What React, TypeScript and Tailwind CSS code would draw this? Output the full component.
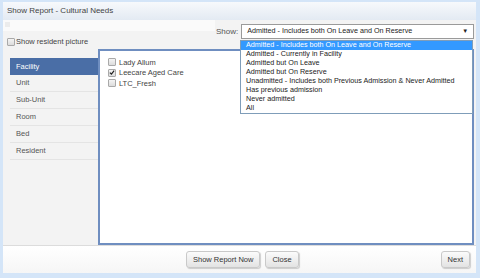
import React from "react";

const font = { fontFamily: '"Liberation Sans", Arial, sans-serif' };

const navItems = ["Facility", "Unit", "Sub-Unit", "Room", "Bed", "Resident"];

const facilities = [
  { name: "Lady Allum", checked: false },
  { name: "Leecare Aged Care", checked: true },
  { name: "LTC_Fresh", checked: false },
];

const showOptions = [
  "Admitted - Includes both On Leave and On Reserve",
  "Admitted - Currently in Facility",
  "Admitted but On Leave",
  "Admitted but On Reserve",
  "Unadmitted - Includes both Previous Admission & Never Admitted",
  "Has previous admission",
  "Never admitted",
  "All",
];

function Box({ checked }: { checked?: boolean }) {
  return (
    <span className="flex h-[8px] w-[8px] shrink-0 items-center justify-center rounded-[1px] border border-[#a9a9a9] bg-gradient-to-b from-[#f4f4f4] to-[#dcdcdc]">
      {checked && (
        <svg width="7" height="7" viewBox="0 0 7 7">
          <path d="M1 3.6 L2.8 5.4 L6 1.2" fill="none" stroke="#222" strokeWidth="1.4" />
        </svg>
      )}
    </span>
  );
}

function Button({ children }: { children: React.ReactNode }) {
  return (
    <button
      type="button"
      className="h-[17px] rounded-[3px] border border-[#c9c9c9] bg-gradient-to-b from-[#fbfbfb] to-[#e3e3e3] px-[6px] text-[7.5px] leading-none text-[#333] shadow-[1px_1px_1px_rgba(0,0,0,0.18)]"
    >
      {children}
    </button>
  );
}

export default function App() {
  return (
    <div
      style={font}
      className="relative flex h-[278px] w-[480px] flex-col bg-[#d4e5f8] pb-[5px] pl-[3px] pr-[4px] pt-[2px]"
    >
      <div className="flex flex-1 flex-col bg-[#f3f3f3]">
        {/* title */}
        <div className="flex h-[18px] items-center bg-gradient-to-b from-[#f7f9fc] to-[#e3eaf3] pl-[4px] text-[8px] text-[#444]">
          Show Report - Cultural Needs
        </div>

        {/* options row */}
        <div className="relative h-[29px]">
          <div className="flex h-[11px]">
            <div className="w-[212px] bg-[#fafafa] pl-[2px] pt-[2px]">
              <span className="block h-[5px] w-[5px] bg-[#ececec]" />
            </div>
            <div className="flex-1" />
          </div>
          <div className="flex items-center gap-[1px] pl-[4px] pt-[5px] text-[7.5px] text-[#444]">
            <Box />
            <span>Show resident picture</span>
          </div>
          <div className="absolute left-[213px] top-[4px] flex items-center">
            <span className="mr-[3px] text-[8px] text-[#555]">Show:</span>
            <div className="flex h-[15px] w-[233px] items-center justify-between border border-[#9a9a9a] bg-white pl-[5px] pr-[5px] text-[7.2px] text-[#222]">
              <span>{showOptions[0]}</span>
              <span className="text-[6px]">▼</span>
            </div>
          </div>
        </div>

        {/* main */}
        <div className="flex flex-1">
          <div className="w-[95px] pl-[7px] pt-[9px]">
            {navItems.map((item, i) => (
              <div
                key={item}
                className={
                  i === 0
                    ? "flex h-[17px] items-center bg-[#4a6ea6] pl-[6px] text-[7.5px] text-white"
                    : "flex h-[17px] items-center border-b border-[#e4e4e4] pl-[6px] text-[7.5px] text-[#555]"
                }
              >
                {item}
              </div>
            ))}
          </div>
          <div className="mr-[2px] flex-1 border-2 border-[#6f8ec0] bg-white pl-[8px] pt-[6px]">
            {facilities.map((f) => (
              <div key={f.name} className="flex h-[10.5px] items-center gap-[3px] text-[7.5px] text-[#444]">
                <Box checked={f.checked} />
                <span>{f.name}</span>
              </div>
            ))}
          </div>
        </div>

        {/* footer */}
        <div className="flex h-[28px] items-center border-t border-[#dcdcdc] bg-gradient-to-b from-[#ffffff] to-[#f6f6f6] pr-[6px]">
          <div className="flex gap-[5px] pl-[183px]">
            <Button>Show Report Now</Button>
            <Button>Close</Button>
          </div>
          <div className="ml-auto flex">
            <Button>Next</Button>
          </div>
        </div>
      </div>

      {/* dropdown list */}
      <div className="absolute left-[240px] top-[40px] w-[233px] border border-[#7f9db9] bg-white text-[7.2px] text-[#222]">
        {showOptions.map((o, i) => (
          <div
            key={o}
            className={
              i === 0
                ? "flex h-[9px] items-center bg-[#3399ff] pl-[5px] text-white"
                : "flex h-[9px] items-center pl-[5px]"
            }
          >
            {o}
          </div>
        ))}
      </div>
    </div>
  );
}
